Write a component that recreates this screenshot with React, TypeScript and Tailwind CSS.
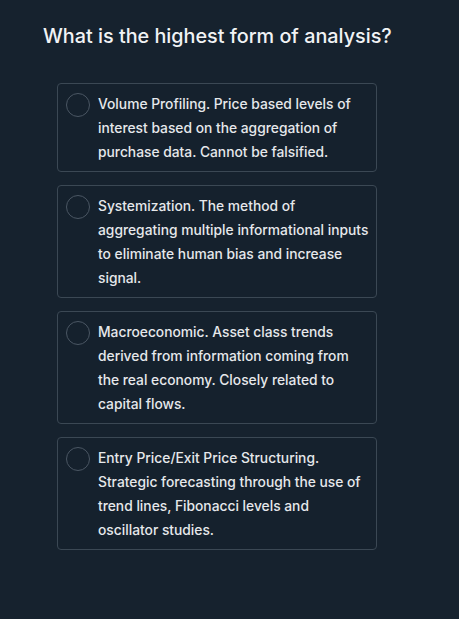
const options = [
  "Volume Profiling. Price based levels of interest based on the aggregation of purchase data. Cannot be falsified.",
  "Systemization. The method of aggregating multiple informational inputs to eliminate human bias and increase signal.",
  "Macroeconomic. Asset class trends derived from information coming from the real economy. Closely related to capital flows.",
  "Entry Price/Exit Price Structuring. Strategic forecasting through the use of trend lines, Fibonacci levels and oscillator studies.",
];

export default function App() {
  return (
    <div className="min-h-screen bg-[#16222e] font-['Inter',sans-serif] pt-[22px]">
      <h1 className="pl-[43px] text-[19.8px] font-medium leading-[28px] text-[#f1f3f5]">
        What is the highest form of analysis?
      </h1>
      <div className="ml-[57px] mt-[33px] flex w-[320px] flex-col gap-[13px]">
        {options.map((text) => (
          <button
            key={text}
            className="flex items-start gap-[8px] rounded-[4px] border border-[#3b4854] bg-[#15212d] pt-[8px] pb-[7px] pl-[8px] pr-[6px] text-left"
          >
            <span className="mt-[1px] h-[24px] w-[24px] shrink-0 rounded-full border border-[#4a5663]" />
            <span className="text-[13.8px] font-medium leading-[24px] text-[#e6e8eb]">{text}</span>
          </button>
        ))}
      </div>
    </div>
  );
}
